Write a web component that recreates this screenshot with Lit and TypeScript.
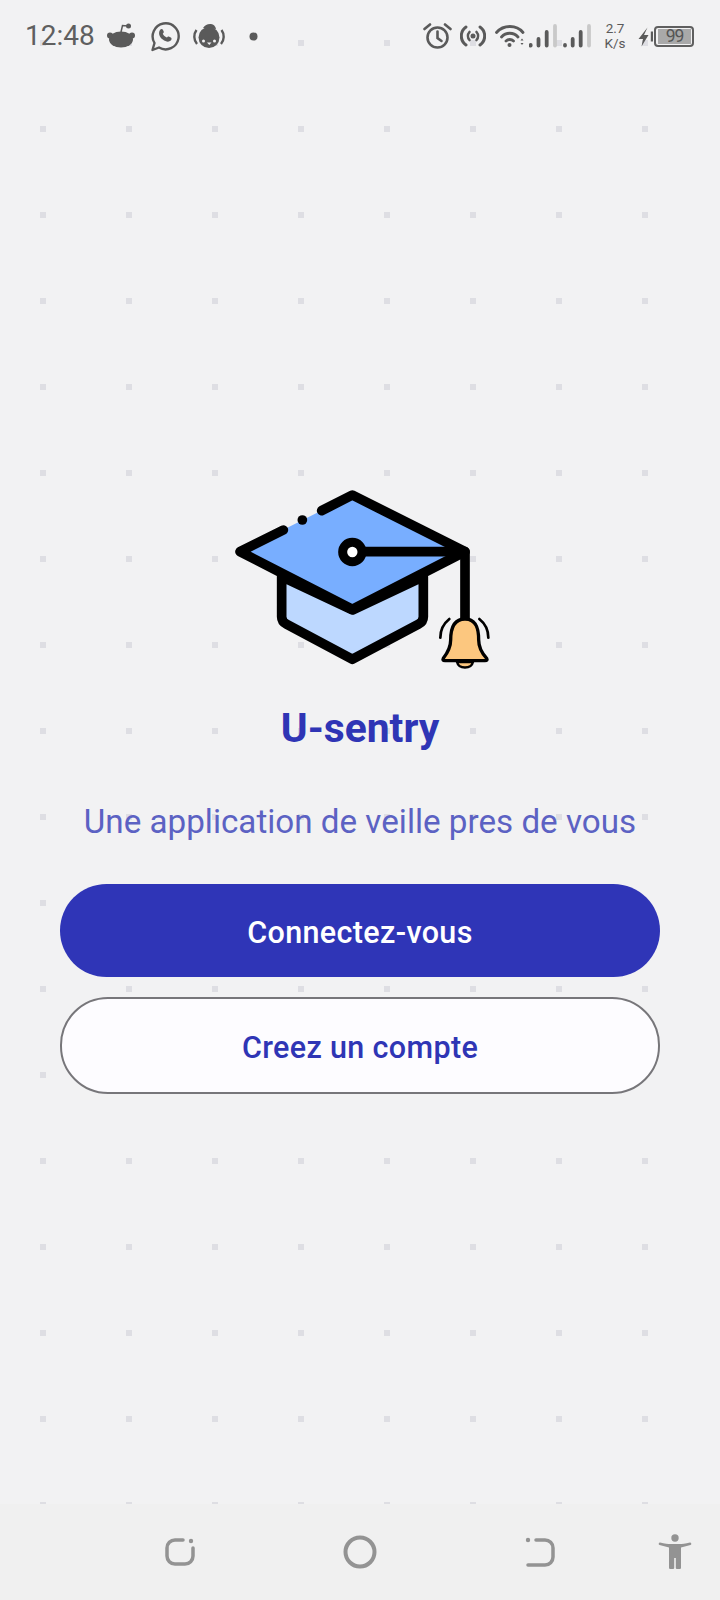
import { LitElement, html, css, svg } from "lit";
import { customElement } from "lit/decorators.js";

@customElement("app-root")
export class AppRoot extends LitElement {
  static styles = css`
    :host {
      display: block;
      width: 720px;
      height: 1600px;
      font-family: Roboto, "Liberation Sans", sans-serif;
    }
    .page {
      width: 720px;
      height: 1600px;
      display: flex;
      flex-direction: column;
      overflow: hidden;
      background-color: #f2f2f3;
      position: relative;
    }
    .grid {
      position: absolute;
      left: 0;
      top: 0;
      fill: #dedee3;
    }
    .layer {
      position: relative;
    }
    .status {
      height: 72px;
      flex: none;
      display: flex;
      align-items: center;
      padding: 0 26px 0 25px;
      color: #5f5f5f;
    }
    .status svg {
      display: block;
      flex: none;
      fill: #5a5a5a;
    }
    .ml15 { margin-left: 15px; }
    .ml12 { margin-left: 12px; }
    .ml24 { margin-left: 24px; }
    .ml8 { margin-left: 8px; }
    .ml9 { margin-left: 9px; }
    .time {
      font-size: 28px;
      line-height: 72px;
      width: 82px;
    }
    .push {
      flex: 1;
    }
    .speed {
      width: 34px;
      margin: 0 5px 0 3px;
      font-size: 13.500px;
      line-height: 15.500px;
      text-align: center;
      color: #5a5a5a;
    }
    .batt {
      width: 40px;
      height: 21px;
      box-sizing: border-box;
      border: 2px solid #5f5f5f;
      border-radius: 4px;
      padding: 1px 1px 1px 2px;
      display: flex;
      margin-left: 1px;
    }
    .batt span {
      flex: 1;
      background: #a9a9a9;
      font-size: 17.500px;
      line-height: 15px;
      letter-spacing: -1px;
      text-align: center;
      color: #555;
    }
    main {
      flex: 1;
      display: flex;
      flex-direction: column;
      align-items: center;
      padding: 398px 60px 0;
    }
    .hat {
      display: block;
      width: 280px;
      height: 210px;
      flex: none;
    }
    h1 {
      margin: 24px 0 0;
      font-size: 40.800px;
      line-height: 48px;
      font-weight: 700;
      color: #2f35b5;
    }
    .sub {
      margin: 50px 0 0;
      font-size: 33.200px;
      line-height: 40px;
      font-weight: 400;
      color: #5c62c3;
      white-space: nowrap;
    }
    .btn {
      width: 600px;
      box-sizing: border-box;
      display: flex;
      align-items: center;
      justify-content: center;
      border-radius: 48px;
      padding-top: 4px;
      font-size: 30.500px;
      font-weight: 500;
      letter-spacing: 0.35px;
    }
    .primary {
      height: 93px;
      margin-top: 42px;
      background: #2f35b7;
      color: #fff;
    }
    .secondary {
      height: 97px;
      margin-top: 20px;
      background: #fdfcff;
      border: 2px solid #77767a;
      color: #2f35b5;
    }
    nav {
      height: 96px;
      flex: none;
      background: #f0f0f0;
      display: grid;
      grid-template-columns: 165px 30px 148px 34px 147px 30px 105px 32px 29px;
      align-items: center;
      padding-bottom: 2px;
      box-sizing: border-box;
    }
    nav svg {
      display: block;
      overflow: visible;
      fill: none;
      stroke: #939393;
      stroke-width: 3.500;
      stroke-linecap: round;
    }
    .r1 { grid-column: 2; }
    .r2 { grid-column: 4; stroke-width: 4; }
    .r3 { grid-column: 6; }
    nav .r4 { grid-column: 8; fill: #939393; stroke: none; }
    .nd { fill: #939393; stroke: none; }
  `;

  private dotPattern() {
    const rects = [];
    for (let y = 43; y < 1520; y += 86) {
      for (let x = 43; x < 720; x += 86) {
        rects.push(svg`<rect x=${x - 3} y=${y - 3} width="6" height="6" />`);
      }
    }
    return rects;
  }

  private hat() {
    return html`<svg class="hat" viewBox="0 0 840 630">
      <path
        d="M185 320V440Q185 455 200 463L397 568L595 463Q610 455 610 440V320L397 420Z"
        fill="#bdd8ff"
        stroke="#000"
        stroke-width="29"
        stroke-linejoin="round"
      />
      <path d="M397 75L735 245L397 418L60 245Z" fill="#78aeff" />
      <g fill="none" stroke="#000" stroke-width="29" stroke-linecap="round" stroke-linejoin="round">
        <path d="M190 180L60 245L397 418L735 245L397 75L305 122" />
        <path d="M247 150h.1" />
        <path d="M397 245H735V455" />
      </g>
      <circle cx="397" cy="246" r="29" fill="#fff" stroke="#000" stroke-width="27" />
      <path
        d="M735 447C700 447 692 478 692 510C692 535 680 552 670 565Q666 572 675 572H795Q804 572 800 565C788 552 776 535 776 510C776 478 770 447 735 447Z"
        fill="#fcc77f"
        stroke="#000"
        stroke-width="10"
        stroke-linejoin="round"
      />
      <path d="M711 576C716 598 754 598 759 576Z" fill="#fcc77f" stroke="#000" stroke-width="7" />
      <path
        d="M688 447C668 463 661 483 661 503M778 447C798 463 805 483 805 503"
        fill="none"
        stroke="#000"
        stroke-width="8"
        stroke-linecap="round"
      />
    </svg>`;
  }

  render() {
    return html`<div class="page">
      <svg class="grid" width="720" height="1600" viewBox="0 0 720 1600">
        ${this.dotPattern()}
      </svg>
      <div class="status layer">
        <div class="time">12:48</div>
        <svg width="28" height="26" viewBox="0 0 28 26">
          <ellipse cx="14" cy="16.500" rx="12" ry="8" />
          <circle cx="3" cy="12.500" r="3" />
          <circle cx="25" cy="12.500" r="3" />
          <circle cx="21.500" cy="3" r="2.500" />
          <path d="M14 9L15.500 2.500L21 3" fill="none" stroke="#5a5a5a" stroke-width="1.500" />
        </svg>
        <svg class="ml15" width="31" height="31" viewBox="0 0 31 31">
          <path
            d="M2.500 29L4.500 22A13 13 0 1 1 9 26.500Z"
            fill="none"
            stroke="#5a5a5a"
            stroke-width="2.400"
            stroke-linejoin="round"
          />
          <path
            d="M10 9c1-1.500 2.500-1.500 3 0l.8 1.800c.2.800-.6 1.300-1 2 .8 1.800 2.200 3 4 3.800.8-.5 1.200-1.300 2-1l2 1c1 .6 1 2 0 3-2 1.800-5 1.200-8-1-3-2.200-5-6-2.800-9.600Z"
          />
        </svg>
        <svg class="ml12" width="32" height="26" viewBox="0 0 32 26">
          <circle cx="16" cy="14.500" r="10.500" />
          <path d="M10 5Q13 .5 18 1Q22 1.500 23 6Z" />
          <path
            d="M3.500 7C.5 11 .5 17 4 21M28.500 7C31.500 11 31.500 17 28 21"
            fill="none"
            stroke="#5a5a5a"
            stroke-width="2.400"
          />
          <circle cx="10.500" cy="18" r="1.500" fill="#f2f2f3" />
          <circle cx="21.500" cy="18" r="1.500" fill="#f2f2f3" />
          <path d="M14 19.500h4.500l-2.250 2.500Z" fill="#f2f2f3" />
        </svg>
        <svg class="ml24" width="9" height="9" viewBox="0 0 9 9">
          <circle cx="4.500" cy="4.500" r="4" />
        </svg>
        <div class="push"></div>
        <svg width="29" height="26" viewBox="0 0 29 26">
          <g fill="none" stroke="#5a5a5a" stroke-width="2.600" stroke-linecap="round">
            <circle cx="14.500" cy="14.500" r="10" />
            <path d="M14.500 8.500V15L18.500 18" />
            <path d="M1.500 6L7 1.500M27.500 6L22 1.500" />
          </g>
        </svg>
        <svg class="ml8" width="26" height="22" viewBox="0 0 26 22">
          <g fill="none" stroke="#5a5a5a" stroke-linecap="round">
            <path stroke-width="3" d="M6 2A11 11 0 0 0 6 20M20 2A11 11 0 0 1 20 20" />
            <path stroke-width="2.600" d="M9.500 7A6 6 0 0 0 9.500 15M16.500 7A6 6 0 0 1 16.500 15" />
          </g>
          <circle cx="13" cy="11" r="2.500" />
        </svg>
        <svg class="ml9" width="34" height="24" viewBox="0 0 34 24">
          <g fill="none" stroke="#5a5a5a" stroke-width="2.800" stroke-linecap="round">
            <path d="M1.500 8.500C8.500 .5 21.500 .5 28 8.500" />
            <path d="M6.500 13C11 8 18.500 8 23 13" />
            <path d="M11 17C13 15 16.500 15 18.500 17" />
          </g>
          <circle cx="14.500" cy="21" r="2" />
          <path d="M25.500 16.500h3l-1.500-2ZM25.500 19h3l-1.500 2Z" />
        </svg>
        <svg width="66" height="24" viewBox="0 0 66 24">
          <g stroke-width="3.800" stroke-linecap="round" fill="none" stroke="#5a5a5a">
            <path d="M1.700 21.600V21M9.500 21.600V15M17.700 21.600V8" />
            <path d="M26 21.600V2" stroke="#c9c9c9" />
            <path d="M36 21.600V21M43.700 21.600V15M51.700 21.600V8" />
            <path d="M60 21.600V2" stroke="#c9c9c9" />
          </g>
        </svg>
        <div class="speed">2.7<br />K/s</div>
        <svg width="16" height="22" viewBox="0 0 16 22">
          <path d="M10.500 2.500L1.500 14H6L4.500 21.500L11.500 10H7Z" />
          <rect x="13.800" y="6.500" width="2.400" height="10" />
        </svg>
        <div class="batt"><span>99</span></div>
      </div>
      <main class="layer">
        ${this.hat()}
        <h1>U-sentry</h1>
        <div class="sub">Une application de veille pres de vous</div>
        <div class="btn primary">Connectez-vous</div>
        <div class="btn secondary">Creez un compte</div>
      </main>
      <nav class="layer">
        <svg class="r1" width="30" height="30" viewBox="0 0 30 30">
          <path d="M18 4H10A8 8 0 0 0 2 12V20A8 8 0 0 0 10 28H20A8 8 0 0 0 28 20V12" />
          <circle class="nd" cx="26" cy="5" r="2.200" />
        </svg>
        <svg class="r2" width="34" height="36" viewBox="0 0 34 36">
          <circle cx="17" cy="19" r="14.500" />
        </svg>
        <svg class="r3" width="30" height="30" viewBox="0 0 30 30">
          <path d="M12 4H21A8 8 0 0 1 29 12V21A8 8 0 0 1 21 29H4" />
          <circle class="nd" cx="4" cy="4" r="2.200" />
        </svg>
        <svg class="r4" width="32" height="36" viewBox="0 0 32 36">
          <circle cx="16" cy="5" r="3.700" />
          <path
            d="M1 9.500Q8 11 11.500 11H20.500Q24 11 31 9.500A1.300 1.300 0 0 1 31.500 12L22 14.500V35Q22 36 20.800 36H18Q16.800 36 16.800 35V25H15.200V35Q15.200 36 14 36H11.200Q10 36 10 35V14.500L.5 12A1.300 1.300 0 0 1 1 9.500Z"
          />
        </svg>
      </nav>
    </div>`;
  }
}
